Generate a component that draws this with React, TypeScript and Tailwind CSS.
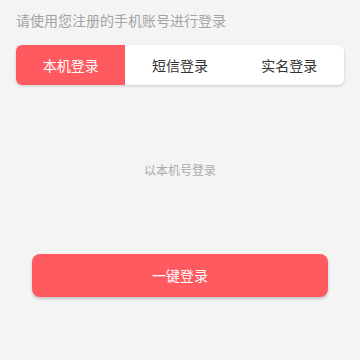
import React, { useState } from 'react';

const tabs = ['本机登录', '短信登录', '实名登录'];

export default function App() {
  const [active, setActive] = useState(0);

  return (
    <div
      className="w-[360px] h-[360px] bg-[#f4f4f4] flex flex-col px-4"
      style={{ fontFamily: '"Noto Sans CJK SC", "Noto Sans", sans-serif' }}
    >
      <p className="mt-[10px] text-[14px] leading-[21px] text-[#a3a3a3]">请使用您注册的手机账号进行登录</p>

      <div className="mt-[14px] h-[40px] flex rounded-[6px] bg-white overflow-hidden shadow-[0_1px_3px_rgba(0,0,0,0.18)]">
        {tabs.map((t, i) => (
          <button
            key={t}
            onClick={() => setActive(i)}
            className={`flex-1 flex items-center justify-center text-[14px] ${
              i === active ? 'bg-[#ff5a5f] text-white' : 'text-[#333333]'
            }`}
          >
            {t}
          </button>
        ))}
      </div>

      <p className="mt-[76px] text-center text-[12px] leading-[18px] text-[#ababab]">以本机号登录</p>

      <button className="mt-[75px] mx-4 h-[43px] rounded-[8px] bg-[#ff5a5f] text-white text-[14px] shadow-[0_2px_3px_rgba(0,0,0,0.2)]">
        一键登录
      </button>
    </div>
  );
}
